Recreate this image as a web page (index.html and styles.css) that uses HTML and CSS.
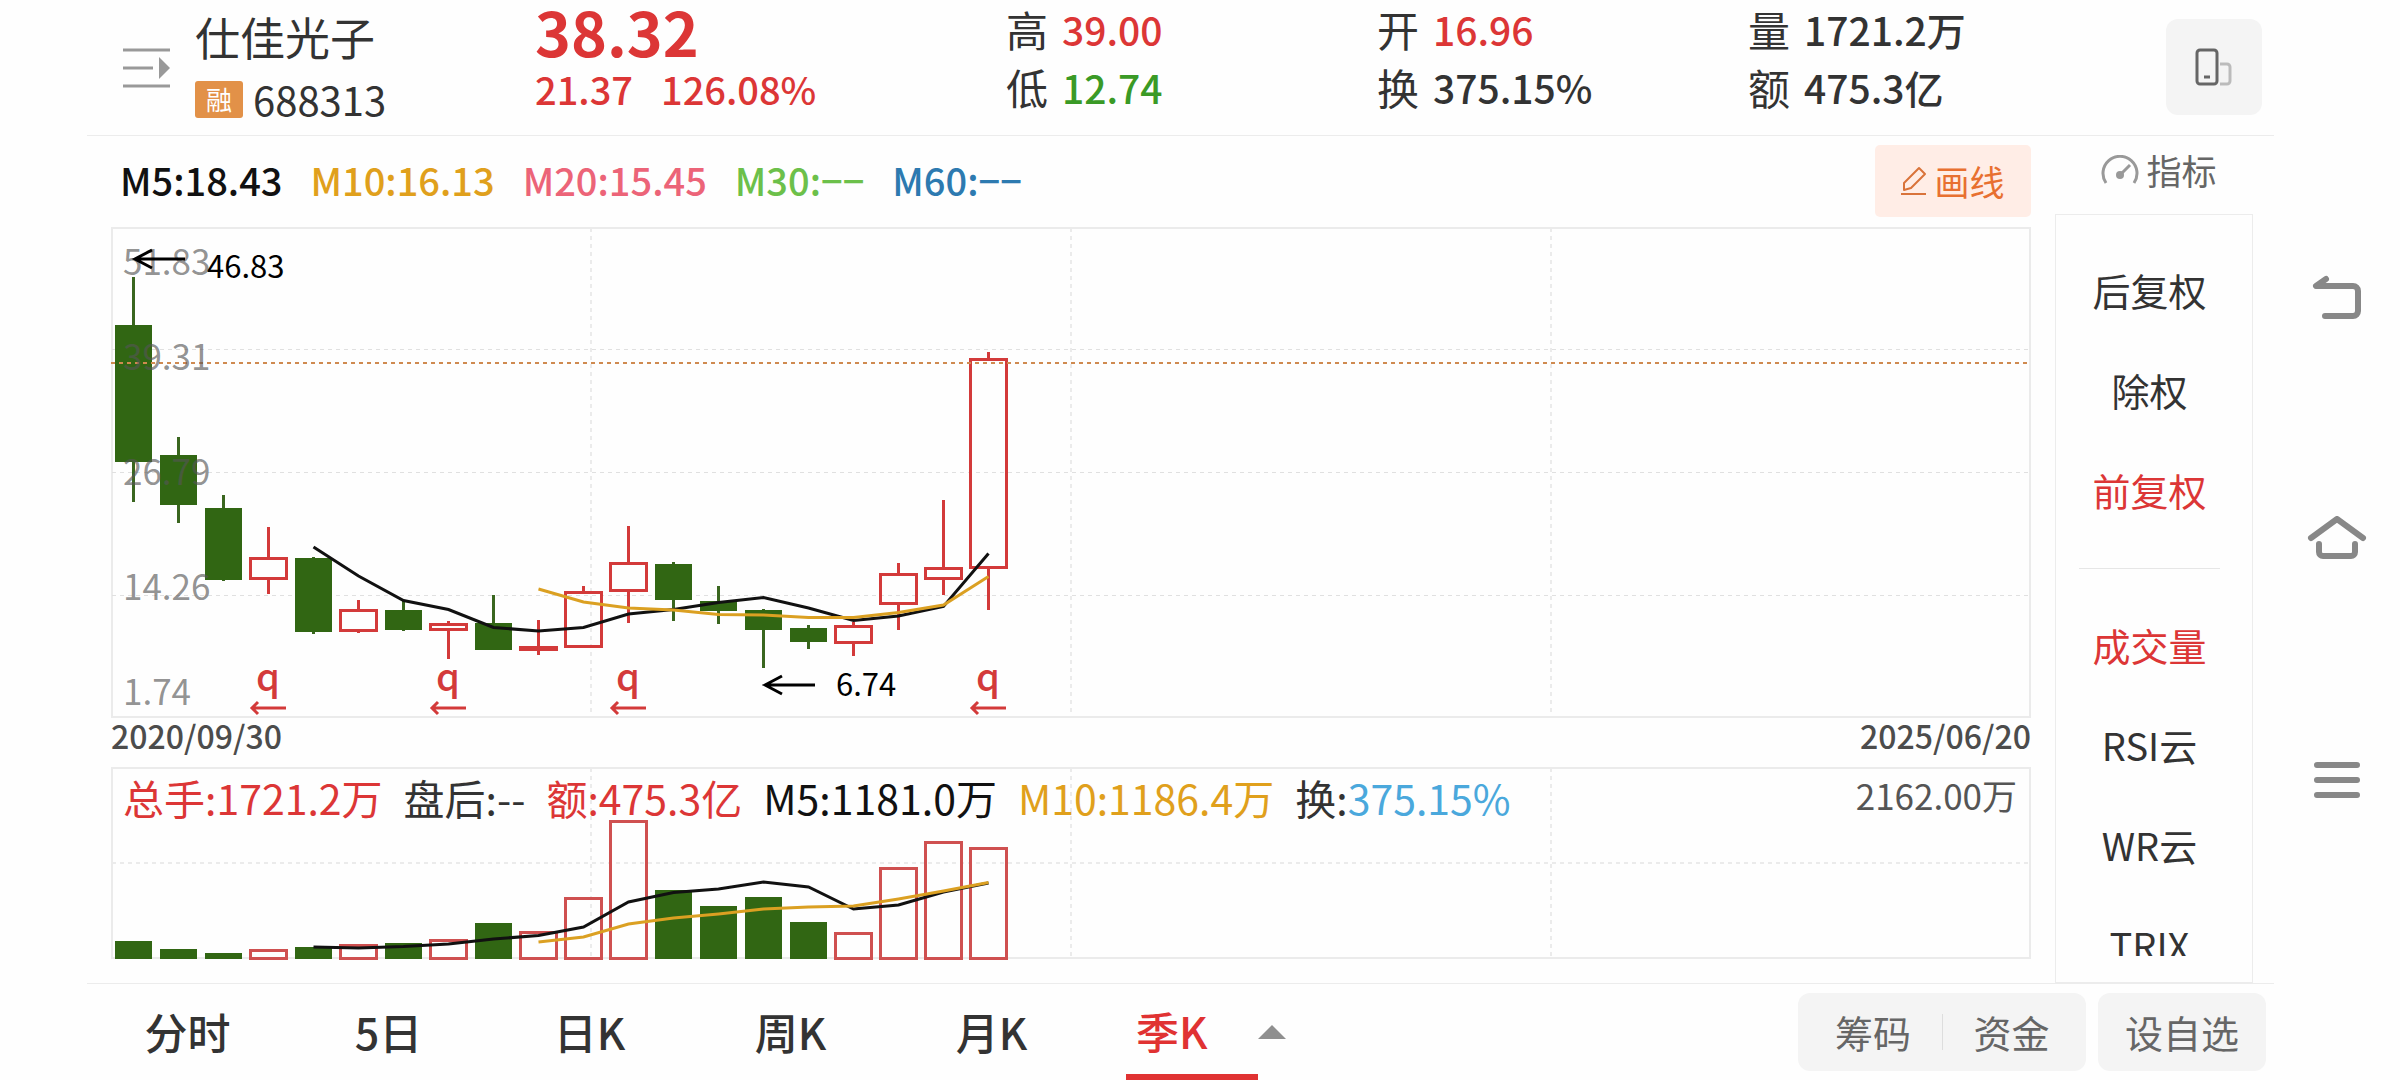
FILE: index.html
```html
<!DOCTYPE html>
<html lang="zh-CN">
<head>
<meta charset="utf-8">
<meta name="viewport" content="width=device-width, initial-scale=1">
<title>仕佳光子 688313</title>
<link rel="stylesheet" href="styles.css">
</head>
<body>
<div class="app">
  <header class="quote">
    <button class="icon-button switch" type="button" aria-label="切换股票">
      <svg width="48" height="40" viewBox="0 0 48 40"><path d="M0 2h47M0 20h30M0 38h47" stroke="#999" stroke-width="3" fill="none"/><path d="M36 9l11 11-11 11z" fill="#999"/></svg>
    </button>
    <div class="stock">
      <h1 class="stock-name">仕佳光子</h1>
      <div class="stock-code"><span class="badge">融</span><span>688313</span></div>
    </div>
    <div class="price up">
      <div class="price-last">38.32</div>
      <div class="price-change"><span>21.37</span><span>126.08%</span></div>
    </div>
    <dl class="stats">
      <div class="stat"><dt>高</dt><dd class="up">39.00</dd></div>
      <div class="stat"><dt>开</dt><dd class="up">16.96</dd></div>
      <div class="stat"><dt>量</dt><dd>1721.2万</dd></div>
      <div class="stat"><dt>低</dt><dd class="down">12.74</dd></div>
      <div class="stat"><dt>换</dt><dd>375.15%</dd></div>
      <div class="stat"><dt>额</dt><dd>475.3亿</dd></div>
    </dl>
    <button class="rotate" type="button" aria-label="切换竖屏">
      <svg width="38" height="38" viewBox="0 0 38 38" fill="none" stroke-width="3"><rect x="2" y="2" width="20" height="34" rx="3" stroke="#666"/><path d="M9 29h6" stroke="#666"/><path d="M25 16h7a3 3 0 0 1 3 3v14a3 3 0 0 1-3 3h-7" stroke="#bbb"/></svg>
    </button>
  </header>

  <main class="main">
    <section class="charts">
      <div class="ma-row">
        <span class="ma ma5">M5:18.43</span>
        <span class="ma ma10">M10:16.13</span>
        <span class="ma ma20">M20:15.45</span>
        <span class="ma ma30">M30:−−</span>
        <span class="ma ma60">M60:−−</span>
        <button class="draw" type="button">
          <svg width="26" height="30" viewBox="0 0 26 30" fill="none" stroke="#d9733a" stroke-width="2"><path d="M3 24v-7L18 2l6 6L10 22z" stroke-linejoin="round"/><path d="M0 28h25"/></svg>
          <span>画线</span>
        </button>
      </div>

      <svg class="chart" viewBox="111 226 1920 494" role="img" aria-label="季K线图">
        <rect class="frame" x="112" y="228" width="1918" height="489"/>
        <path class="grid" d="M112 349.500H2030M112 472.500H2030M112 595.500H2030"/>
        <path class="grid grid-strong" d="M591 228V717M1071 228V717M1551 228V717"/>
        <path class="wick-down" d="M133.500 277V502M178.500 437V523M223.500 495V581M313.500 557V634M403.500 600V631M493.500 595V650M673.500 562V621M718.500 586V624M763.500 609V668M808.500 625V649"/>
        <path class="body-down" d="M115 325h37v137h-37zM160 455h37v50h-37zM205 508h37v72h-37zM295 558h37v74h-37zM385 610h37v20h-37zM475 623h37v27h-37zM655 564h37v36h-37zM700 601h37v10h-37zM745 610h37v20h-37zM790 628h37v14h-37z"/>
        <path class="up-line" d="M268.500 527V557M268.500 580V594M358.500 600V609M358.500 631V633M448.500 621V624M448.500 631V659M538.500 620V655M583.500 586V591M628.500 526V562M628.500 592V623M853.500 622V625M853.500 644V656M898.500 563V573M898.500 605V630M943.500 500V567M943.500 580V595M988.500 352V358M988.500 569V610"/>
        <path class="up-line" d="M250.500 558.500h36v20h-36zM340.500 610.500h36v20h-36zM430.500 624.500h36v5h-36zM520.500 647.500h36v2h-36zM565.500 592.500h36v54h-36zM610.500 563.500h36v27h-36zM835.500 626.500h36v16h-36zM880.500 574.500h36v29h-36zM925.500 568.500h36v10h-36zM970.500 359.500h36v208h-36z"/>
        <path class="last-price" d="M111 363H2030"/>
        <polyline class="line-ma5" points="313.500,547 358.500,576 403.500,600.500 448.500,609.500 493.500,627.500 538.500,631 583.500,627.500 628.500,614 673.500,609.500 718.500,602.500 763.500,597.500 808.500,608 853.500,620.500 898.500,616 943.500,606.500 988.500,553.500"/>
        <polyline class="line-ma10" points="538.500,589 583.500,602 628.500,608 673.500,610 718.500,614.500 763.500,615 808.500,617.500 853.500,617.500 898.500,612.500 943.500,605 988.500,576.500"/>
        <g class="axis">
          <text x="123" y="275">51.83</text>
          <text x="123" y="370">39.31</text>
          <text x="123" y="485">26.79</text>
          <text x="123" y="600">14.26</text>
          <text x="123" y="705">1.74</text>
        </g>
        <path class="pointer" d="M185 259H135M152 250L135 259L152 268M815 685H765M782 676L765 685L782 694"/>
        <g class="extreme">
          <text x="207" y="278">46.83</text>
          <text x="836" y="696">6.74</text>
        </g>
        <g class="event">
          <text x="268" y="691">q</text>
          <text x="448" y="691">q</text>
          <text x="628" y="691">q</text>
          <text x="988" y="691">q</text>
        </g>
        <path class="event-arrow" d="M286 708H252M258 702l-6 6l6 6M466 708H432M438 702l-6 6l6 6M646 708H612M618 702l-6 6l6 6M1006 708H972M978 702l-6 6l6 6"/>
      </svg>

      <div class="dates"><time datetime="2020-09-30">2020/09/30</time><time datetime="2025-06-20">2025/06/20</time></div>

      <div class="volume">
        <svg class="chart" viewBox="111 766 1920 194" role="img" aria-label="成交量">
          <rect class="frame" x="112" y="768" width="1918" height="190"/>
          <path class="grid grid-strong" d="M112 863H2030M591 768V958M1071 768V958M1551 768V958"/>
          <path class="body-down" d="M115 941h37v18h-37zM160 949h37v10h-37zM205 953h37v6h-37zM295 947h37v12h-37zM385 943h37v16h-37zM475 923h37v36h-37zM655 890h37v69h-37zM700 906h37v53h-37zM745 897h37v62h-37zM790 922h37v37h-37z"/>
          <path class="volume-up" d="M250.500 958.500v-8h36v8zM340.500 958.500v-13h36v13zM430.500 958.500v-18h36v18zM520.500 958.500v-26h36v26zM565.500 958.500v-60h36v60zM610.500 958.500v-137h36v137zM835.500 958.500v-25h36v25zM880.500 958.500v-90h36v90zM925.500 958.500v-116h36v116zM970.500 958.500v-110h36v110z"/>
          <polyline class="line-ma5" points="313.500,947 358.500,948 403.500,946.500 448.500,944 493.500,939 538.500,935.500 583.500,927 628.500,902 673.500,892.500 718.500,889 763.500,882 808.500,887 853.500,909 898.500,905 943.500,892 988.500,883"/>
          <polyline class="line-ma10" points="538.500,942 583.500,937 628.500,924 673.500,918 718.500,914 763.500,909 808.500,907 853.500,906 898.500,899 943.500,891 988.500,882.500"/>
        </svg>
        <div class="volume-legend">
          <span class="up">总手:1721.2万</span>
          <span>盘后:--</span>
          <span class="up">额:475.3亿</span>
          <span class="ma5">M5:1181.0万</span>
          <span class="ma10">M10:1186.4万</span>
          <span>换:<span class="turnover">375.15%</span></span>
          <span class="volume-max">2162.00万</span>
        </div>
      </div>
    </section>

    <aside class="side">
      <button class="side-head" type="button">
        <svg width="38" height="30" viewBox="0 0 38 30" fill="none" stroke="#999" stroke-width="3"><path d="M5 28A17 17 0 1 1 33 28"/><path d="M19 20L29 10"/><circle cx="19" cy="20" r="4" fill="#999" stroke="none"/></svg>
        <span>指标</span>
      </button>
      <div class="side-box">
        <div class="side-list">
          <button class="side-item" type="button">后复权</button>
          <button class="side-item" type="button">除权</button>
          <button class="side-item up" type="button">前复权</button>
          <hr class="side-rule">
          <button class="side-item up" type="button">成交量</button>
          <button class="side-item" type="button">RSI云</button>
          <button class="side-item" type="button">WR云</button>
          <button class="side-item" type="button">TRIX</button>
        </div>
      </div>
    </aside>
  </main>

  <footer class="footer">
    <nav class="tabs">
      <button class="tab" type="button">分时</button>
      <button class="tab" type="button">5日</button>
      <button class="tab" type="button">日K</button>
      <button class="tab" type="button">周K</button>
      <button class="tab" type="button">月K</button>
      <button class="tab tab-active" type="button"><span class="tab-label">季K</span><svg width="28" height="14" viewBox="0 0 28 14"><path d="M14 0l14 14H0z" fill="#8f8f8f"/></svg></button>
    </nav>
    <div class="actions">
      <div class="action-group">
        <button class="action" type="button">筹码</button>
        <button class="action" type="button">资金</button>
      </div>
      <button class="action action-single" type="button">设自选</button>
    </div>
  </footer>
</div>

<nav class="system">
  <button class="icon-button" type="button" aria-label="返回">
    <svg width="60" height="46" viewBox="0 0 60 46" fill="none" stroke="#888" stroke-width="6" stroke-linecap="round" stroke-linejoin="round"><path d="M19 4L9 11H46a5 5 0 0 1 5 5V36a5 5 0 0 1-5 5H18"/></svg>
  </button>
  <button class="icon-button" type="button" aria-label="主页">
    <svg width="60" height="46" viewBox="0 0 60 46" fill="none" stroke="#888" stroke-width="6" stroke-linecap="round" stroke-linejoin="round"><path d="M4 22L30 3L56 22"/><path d="M12 28V36a4 4 0 0 0 4 4H44a4 4 0 0 0 4-4V28"/></svg>
  </button>
  <button class="icon-button" type="button" aria-label="最近任务">
    <svg width="60" height="46" viewBox="0 0 60 46" fill="none" stroke="#888" stroke-width="6" stroke-linecap="round"><path d="M10 8H50M10 23H50M10 38H50"/></svg>
  </button>
</nav>
</body>
</html>
```
FILE: styles.css
```css
* {
  box-sizing: border-box;
}

body {
  margin: 0;
  min-height: 100vh;
  display: flex;
  background: #fefefe;
  color: #333;
  font-family: "Noto Sans CJK SC", "Noto Sans", sans-serif;
  font-size: 40px;
  line-height: 40px;
}

button {
  margin: 0;
  padding: 0;
  border: 0;
  background: none;
  color: inherit;
  font: inherit;
  white-space: nowrap;
}

svg {
  display: block;
  flex: none;
}

h1, dl, dd {
  margin: 0;
  font-weight: 400;
}

.up { color: #dc3636; }
.down { color: #3a9a26; }
.ma5 { color: #111; }
.ma10 { color: #e0a01c; }
.ma20 { color: #ec6478; }
.ma30 { color: #6cc04a; }
.ma60 { color: #2d7ab0; }

.app {
  flex: 1;
  min-width: 0;
  margin-left: 87px;
  display: flex;
  flex-direction: column;
}

/* Quote header */
.quote {
  display: flex;
  height: 136px;
  padding-right: 12px;
  border-bottom: 1px solid #ececec;
}

.switch {
  width: 108px;
  padding-left: 36px;
}

.stock {
  width: 340px;
  padding-top: 11px;
}

.stock-name {
  font-size: 45px;
  line-height: 52px;
}

.stock-code {
  display: flex;
  align-items: center;
  gap: 10px;
  padding-top: 16px;
}

.badge {
  width: 48px;
  height: 37px;
  border-radius: 3px;
  background: #e29148;
  color: #fff;
  font-size: 26px;
  line-height: 36px;
  text-align: center;
}

.price {
  width: 471px;
  font-weight: 500;
}

.price-last {
  font-size: 61px;
  font-weight: 700;
  line-height: 62px;
}

.price-change {
  display: flex;
  gap: 28px;
  padding-top: 7px;
  font-size: 38px;
}

.stats {
  flex: 1;
  display: grid;
  grid-template-columns: 371px 371px 1fr;
  grid-auto-rows: 58px;
}

.stat {
  display: flex;
  align-items: center;
  gap: 14px;
  line-height: 58px;
  white-space: nowrap;
}

.stat dt {
  font-size: 42px;
}

.stat dd {
  font-size: 39px;
  font-weight: 500;
}

.rotate {
  display: flex;
  align-items: center;
  justify-content: center;
  width: 96px;
  height: 96px;
  margin-top: 19px;
  border-radius: 12px;
  background: #f4f4f4;
}

/* Charts and indicator list */
.main {
  flex: 1;
  display: flex;
  gap: 24px;
  padding: 0 21px 0 24px;
}

.charts {
  flex: 1;
  min-width: 0;
}

.ma-row {
  display: flex;
  align-items: center;
  gap: 28px;
  height: 90px;
  padding-left: 9px;
}

.ma {
  padding-bottom: 2px;
  font-size: 38px;
  font-weight: 500;
}

.draw {
  display: flex;
  align-items: center;
  justify-content: center;
  gap: 7px;
  width: 156px;
  height: 72px;
  margin-left: auto;
  border-radius: 5px;
  background: #ffede6;
  color: #e87030;
  font-size: 35px;
}

.chart {
  width: 100%;
  height: auto;
}

.frame {
  fill: none;
  stroke: #ebebeb;
  stroke-width: 2;
}

.grid {
  fill: none;
  stroke: #e0e0e0;
  stroke-width: 1;
  stroke-dasharray: 4 4;
}

.grid-strong {
  stroke: #ebebeb;
  stroke-width: 2;
}

.body-down { fill: #316613; }
.wick-down { stroke: #3a661f; stroke-width: 3; }
.up-line { fill: none; stroke: #d33a3a; stroke-width: 3; }
.volume-up { fill: none; stroke: #cf5050; stroke-width: 3; }
.last-price { stroke: #cf8a50; stroke-width: 2; stroke-dasharray: 4 4; }
.line-ma5 { fill: none; stroke: #111; stroke-width: 3; }
.line-ma10 { fill: none; stroke: #dba022; stroke-width: 3; }
.axis { fill: #555; fill-opacity: 0.65; font-size: 35px; }
.pointer { fill: none; stroke: #000; stroke-width: 3; }
.extreme { fill: #000; font-size: 31px; }
.event { fill: #d33a3a; font-size: 38px; font-weight: 500; text-anchor: middle; }
.event-arrow { fill: none; stroke: #d33a3a; stroke-width: 3; }

.dates {
  display: flex;
  justify-content: space-between;
  height: 46px;
  color: #4c4c4c;
  font-size: 32px;
  font-weight: 500;
  line-height: 30px;
}

.volume {
  position: relative;
}

.volume-legend {
  position: absolute;
  top: 11px;
  left: 12px;
  right: 14px;
  display: flex;
  gap: 21px;
  font-size: 41px;
  white-space: nowrap;
}

.turnover {
  color: #4aa8dc;
}

.volume-max {
  margin-left: auto;
  color: #555;
  font-size: 35px;
  line-height: 36px;
}

.side {
  width: 198px;
  display: flex;
  flex-direction: column;
}

.side-head {
  display: flex;
  align-items: center;
  justify-content: center;
  gap: 7px;
  height: 78px;
  padding: 0 0 11px 10px;
  color: #666;
  font-size: 35px;
}

.side-box {
  flex: 1 1 0;
  min-height: 0;
  padding: 28px 0 26px;
  border: 1px solid #ececec;
}

.side-list {
  height: 100%;
  display: flex;
  flex-direction: column;
  overflow: hidden;
  contain: size;
}

.side-item {
  flex: none;
  height: 100px;
  padding: 0 9px 6px 0;
  font-size: 38px;
}

.side-rule {
  flex: none;
  width: 141px;
  height: 1px;
  margin: 25px 0 29px 23px;
  border: 0;
  background: #e6e6e6;
}

/* Period tabs and actions */
.footer {
  display: flex;
  justify-content: space-between;
  height: 97px;
  padding-right: 8px;
  border-top: 1px solid #ececec;
}

.tabs {
  display: flex;
}

.tab {
  width: 201px;
  padding-bottom: 2px;
  font-size: 43px;
  font-weight: 500;
}

.tab-active {
  display: flex;
  align-items: center;
  justify-content: flex-end;
  padding: 0 7px 0 0;
  color: #e03232;
}

.tab-label {
  width: 132px;
  height: 96px;
  padding: 2px 0 0 10px;
  border-bottom: 6px solid #e03232;
  line-height: 88px;
  text-align: left;
}

.actions {
  display: flex;
  gap: 12px;
  padding-top: 9px;
}

.action-group {
  display: flex;
  align-items: center;
  height: 78px;
  padding: 0 6px;
  border-radius: 12px;
  background: #f4f4f4;
}

.action {
  width: 138px;
  height: 36px;
  color: #666;
  font-size: 38px;
  line-height: 36px;
}

.action + .action {
  border-left: 1px solid #ddd;
}

.action-single {
  width: 168px;
  height: 78px;
  border-radius: 12px;
  background: #f4f4f4;
}

/* System navigation */
.system {
  width: 126px;
  display: flex;
  flex-direction: column;
  align-items: center;
  justify-content: center;
  gap: 195px;
  padding-bottom: 3px;
}
```
